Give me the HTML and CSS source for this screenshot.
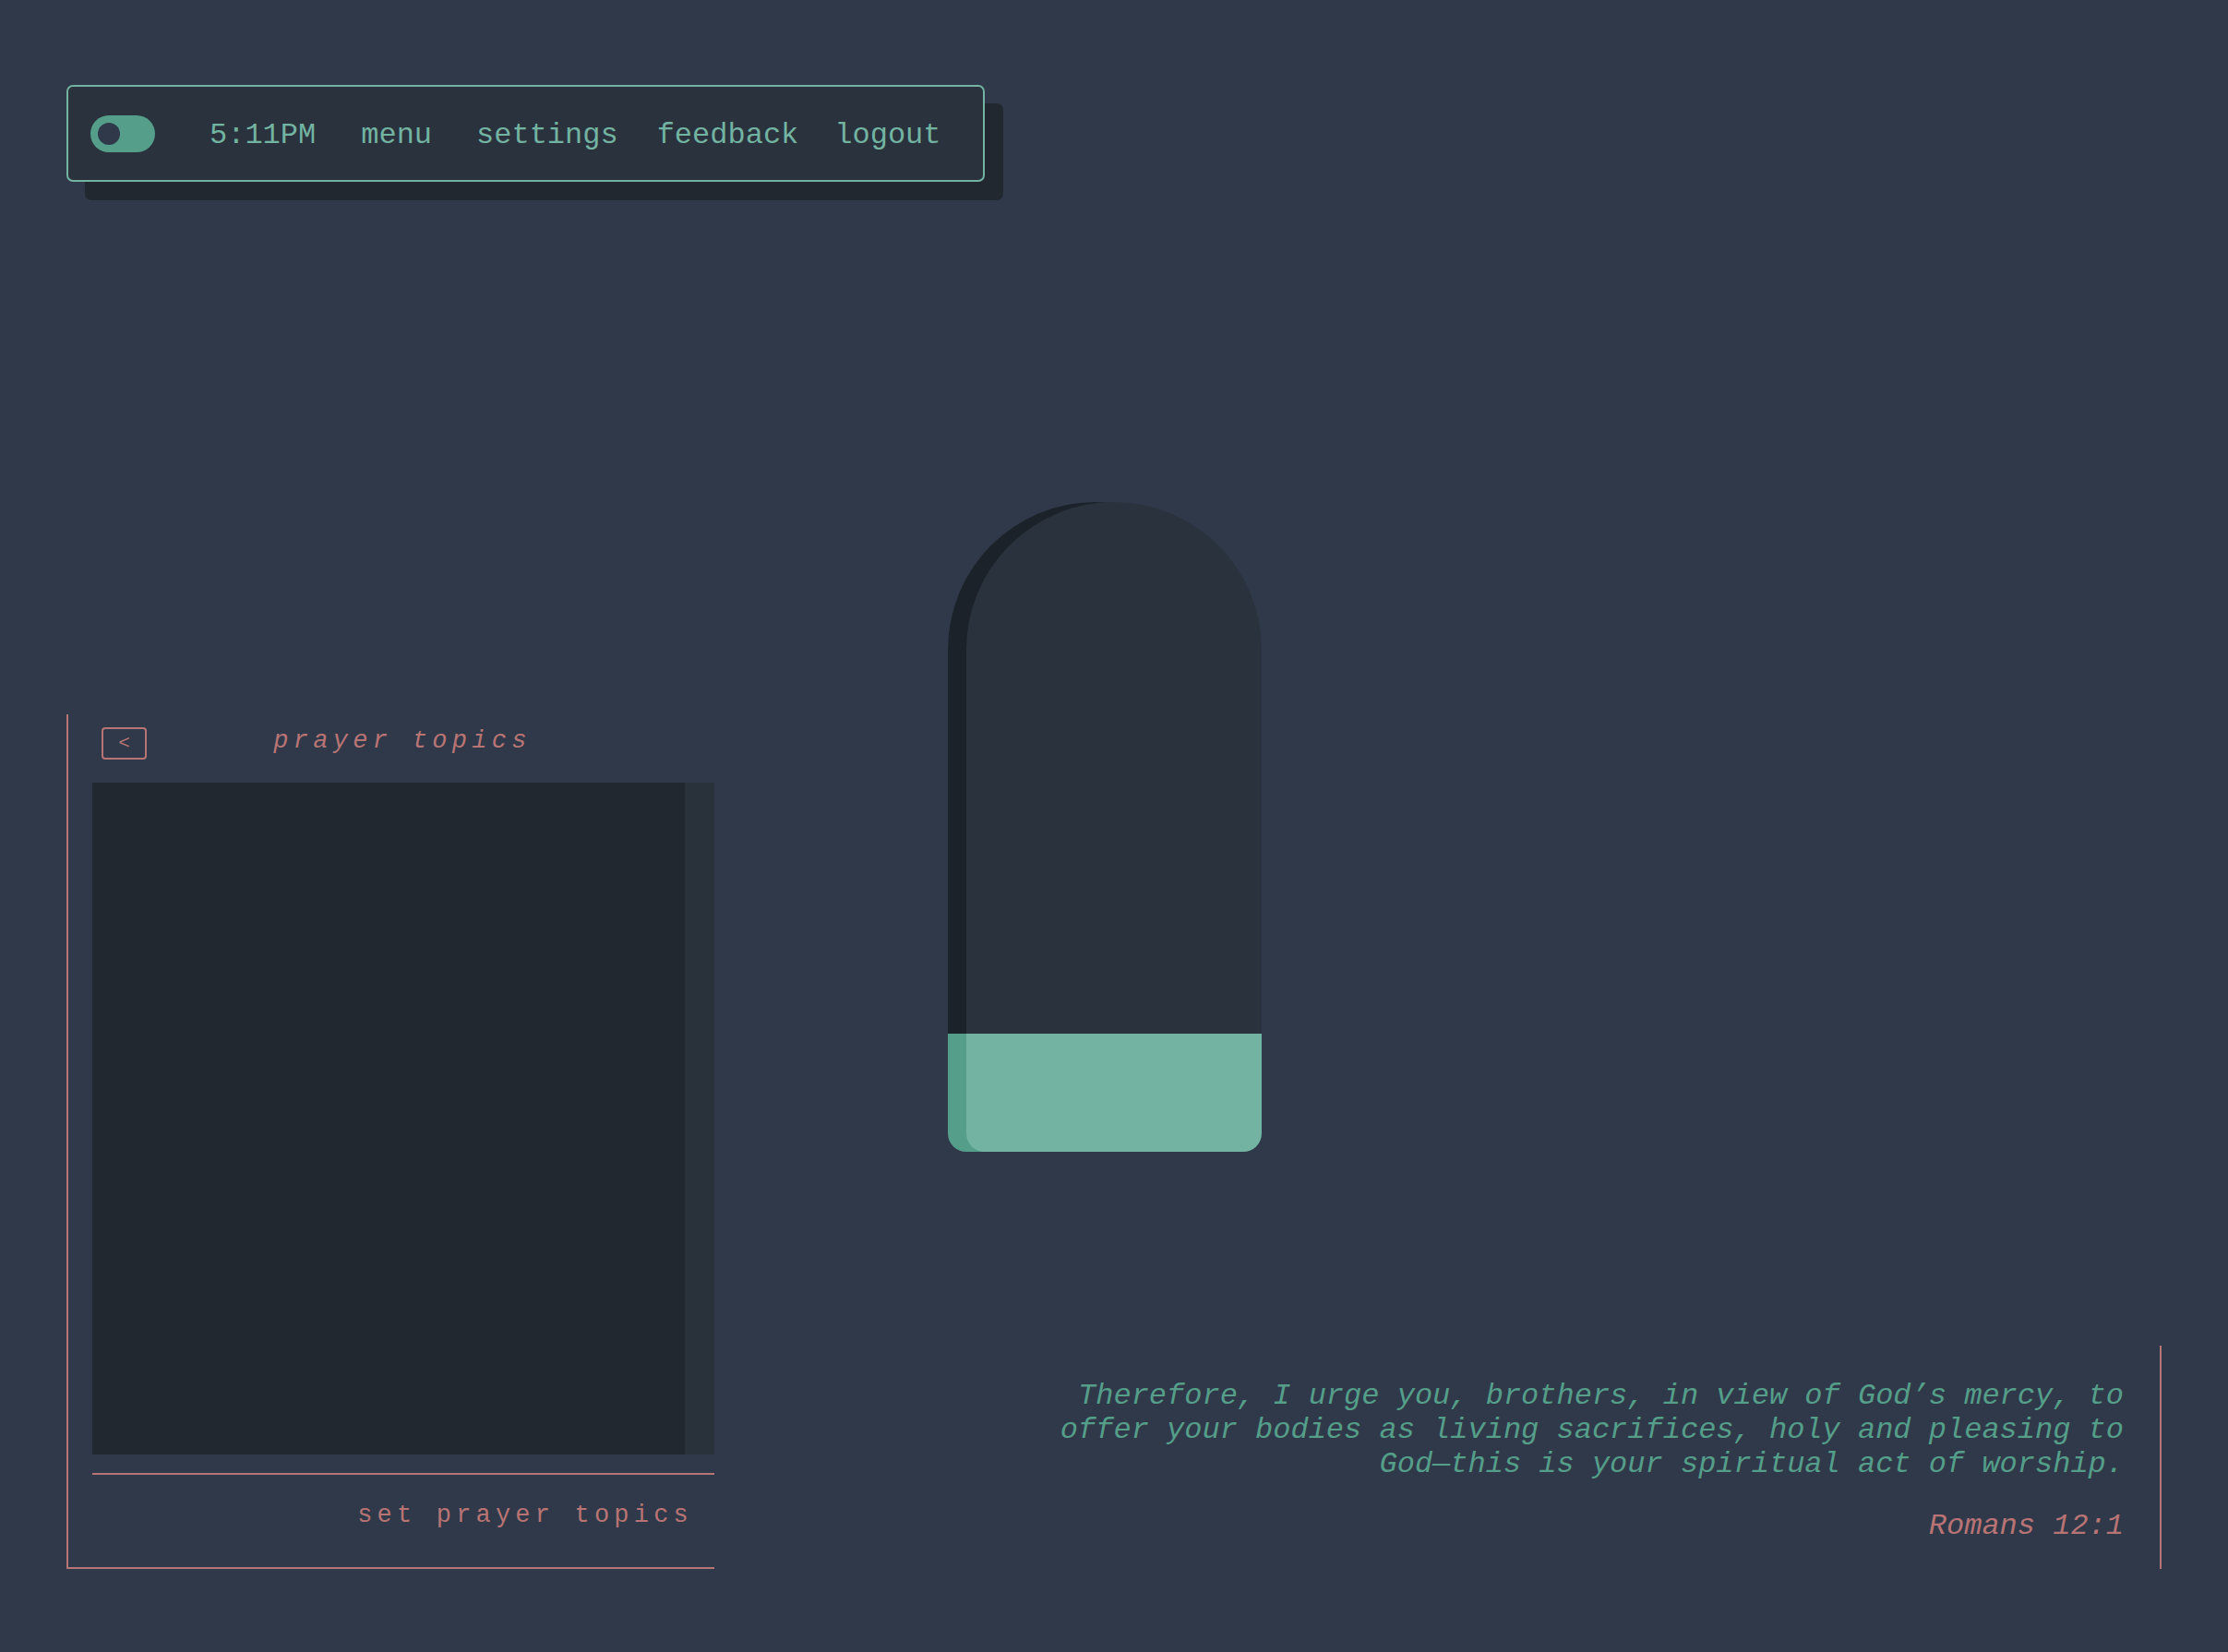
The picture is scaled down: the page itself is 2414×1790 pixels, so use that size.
FILE: index.html
```html
<!DOCTYPE html>
<html lang="en">
<head>
<meta charset="utf-8">
<title>prayer</title>
<link rel="stylesheet" href="styles.css">
</head>
<body>
<div class="page">
  <nav class="topbar">
    <span class="toggle"><span class="knob"></span></span>
    <span class="clock">5:11PM</span>
    <a class="link link-menu">menu</a>
    <a class="link link-settings">settings</a>
    <a class="link link-feedback">feedback</a>
    <a class="link link-logout">logout</a>
  </nav>

  <div class="jar"></div>

  <section class="topics">
    <header class="topics-head">
      <button class="back" type="button">&lt;</button>
      <h2 class="topics-title">prayer topics</h2>
    </header>
    <div class="topics-box">
      <div class="topics-list"></div>
      <div class="topics-scroll"></div>
    </div>
    <div class="topics-foot">set prayer topics</div>
  </section>

  <blockquote class="verse">
    <p class="verse-text">Therefore, I urge you, brothers, in view of God’s mercy, to offer your bodies as living sacrifices, holy and pleasing to God—this is your spiritual act of worship.</p>
    <p class="verse-ref">Romans 12:1</p>
  </blockquote>
</div>
</body>
</html>
```

FILE: styles.css
```css
html {
  margin: 0;
  padding: 0;
  background: #303949;
}

body {
  margin: 0;
  padding: 0;
  font-family: "Courier New", "Liberation Mono", monospace;
}

.page {
  box-sizing: border-box;
  height: 100vh;
  padding: 92px 72px 90px;
  display: grid;
  grid-template-columns: 1fr;
  grid-template-rows: 1fr;
}

.page > * {
  grid-area: 1 / 1;
}

/* top bar */
.topbar {
  justify-self: start;
  align-self: start;
  display: flex;
  align-items: center;
  padding: 30px 45px 30px 24px;
  background: #29323d;
  border: 2px solid #72b3a2;
  border-radius: 7px;
  box-shadow: 20px 20px 0 #22282f;
  color: #72b3a2;
  font-size: 32px;
}

.toggle {
  display: flex;
  align-items: center;
  box-sizing: border-box;
  width: 70px;
  height: 40px;
  padding-left: 8px;
  border-radius: 20px;
  background: #549e8a;
}

.knob {
  width: 24px;
  height: 24px;
  border-radius: 50%;
  background: #303949;
}

.clock,
.link {
  padding-top: 4px;
}

.clock {
  margin-left: 59px;
}

.link {
  color: #72b3a2;
  text-decoration: none;
}

.link-menu { margin-left: 49px; }
.link-settings { margin-left: 48px; }
.link-feedback { margin-left: 42px; }
.link-logout { margin-left: 39px; }

/* jar */
.jar {
  justify-self: center;
  align-self: center;
  position: relative;
  width: 320px;
  height: 704px;
  border-radius: 160px 160px 20px 20px;
  background: linear-gradient(to bottom, #29323d 576px, #72b3a2 576px);
}

.jar::before {
  content: "";
  position: absolute;
  top: 0;
  left: -20px;
  width: 320px;
  height: 704px;
  border-radius: 160px 160px 20px 20px;
  background: linear-gradient(to bottom, #1c2229 576px, #549e8a 576px);
  z-index: -1;
}

/* prayer topics panel */
.topics {
  justify-self: start;
  align-self: end;
  width: 702px;
  box-sizing: border-box;
  padding-left: 26px;
  border-left: 2px solid #b87474;
  border-bottom: 2px solid #b87474;
  color: #b87474;
}

.topics-head {
  display: grid;
  grid-template-columns: 1fr auto 1fr;
  align-items: start;
  height: 74px;
  box-sizing: border-box;
  padding-top: 14px;
}

.back {
  justify-self: start;
  margin-left: 10px;
  width: 49px;
  height: 35px;
  padding: 0;
  background: transparent;
  border: 2px solid #b87474;
  border-radius: 4px;
  color: #b87474;
  font-family: "Courier New", "Liberation Mono", monospace;
  font-size: 21px;
  line-height: 1;
}

.topics-title {
  grid-column: 2;
  margin: 0 2px 0 0;
  font-size: 27px;
  font-weight: normal;
  font-style: italic;
  letter-spacing: 5.3px;
  line-height: normal;
}

.topics-box {
  display: flex;
  height: 728px;
}

.topics-list {
  flex: 1;
  background: #21282f;
}

.topics-scroll {
  width: 32px;
  background: #29313b;
}

.topics-foot {
  margin-top: 20px;
  border-top: 2px solid #b87474;
  padding: 29px 23px 41px 0;
  text-align: right;
  font-size: 27px;
  letter-spacing: 5.2px;
}

/* verse */
.verse {
  justify-self: end;
  align-self: end;
  margin: 0;
  padding: 36px 39px 28px 0;
  border-right: 2px solid #b87474;
  text-align: right;
  font-size: 32px;
  font-style: italic;
}

.verse-text {
  width: 1200px;
  margin: 0;
  color: #549e8a;
}

.verse-ref {
  margin: 30px 0 0;
  color: #b87474;
}
```
